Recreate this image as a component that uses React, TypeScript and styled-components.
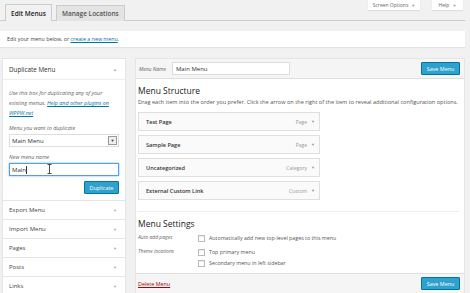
import styled, { createGlobalStyle } from 'styled-components';

const Global = createGlobalStyle`
  html, body { margin: 0; padding: 0; background: #f1f1f1; }
  body { font-family: 'Open Sans', 'Liberation Sans', sans-serif; color: #444; font-size: 6px; }
  * { box-sizing: border-box; }
`;

const Page = styled.div`
  width: 470px;
  height: 293px;
  overflow: hidden;
  position: relative;
  padding-right: 5px;
`;

const TopBar = styled.div`
  display: flex;
  justify-content: flex-end;
  gap: 12px;
  padding-right: 2px;
  height: 10px;
  margin-bottom: -6px;
`;

const MetaTab = styled.div<{ $w: number }>`
  width: ${(p) => p.$w}px;
  height: 10px;
  background: #fff;
  box-shadow: 0 1px 1px rgba(0, 0, 0, 0.08);
  font-size: 5px;
  color: #666;
  display: flex;
  align-items: center;
  justify-content: center;
  gap: 3px;
`;

const Caret = styled.span`
  font-size: 4px;
  color: #999;
`;

const Tabs = styled.div`
  display: flex;
  gap: 4px;
  padding-left: 5px;
  border-bottom: 1px solid #ccc;
  height: 17px;
  align-items: flex-end;
`;

const Tab = styled.div<{ $active?: boolean }>`
  padding: 0 5px;
  display: flex;
  align-items: center;
  font-size: 6.5px;
  font-weight: 600;
  border: 1px solid #ccc;
  border-bottom: none;
  margin-bottom: -1px;
  background: ${(p) => (p.$active ? '#f1f1f1' : '#e4e4e4')};
  color: ${(p) => (p.$active ? '#222' : '#555')};
  height: ${(p) => (p.$active ? '17px' : '16px')};
`;

const Notice = styled.div`
  margin-top: 10px;
  height: 16px;
  background: #fff;
  box-shadow: 0 1px 1px rgba(0, 0, 0, 0.06);
  display: flex;
  align-items: center;
  padding-left: 7px;
  font-size: 5.3px;
`;

const Link = styled.a`
  color: #0074a2;
  text-decoration: underline;
`;

const Columns = styled.div`
  display: flex;
  gap: 9px;
  margin-top: 11px;
  padding-left: 2px;
`;

const Left = styled.div`
  width: 124px;
  flex: none;
`;

const Box = styled.div`
  background: #fff;
  border: 1px solid #e5e5e5;
`;

const BoxHead = styled.div`
  height: 21px;
  display: flex;
  align-items: center;
  justify-content: space-between;
  padding: 0 8px 0 6px;
  font-size: 6.3px;
  color: #333;
  border-bottom: 1px solid #eee;
`;

const Toggle = styled.span`
  font-size: 4px;
  color: #aaa;
`;

const BoxBody = styled.div`
  padding: 8px 6px 6px 6px;
`;

const Help = styled.p`
  margin: 0;
  font-style: italic;
  font-size: 5.4px;
  line-height: 10px;
  color: #666;
`;

const Label = styled.div`
  margin-top: 6px;
  font-style: italic;
  font-size: 5.4px;
  color: #666;
  line-height: 9px;
`;

const Select = styled.div`
  margin-top: 1px;
  height: 13px;
  border: 1px solid #ddd;
  display: flex;
  align-items: center;
  justify-content: space-between;
  padding-left: 2px;
  font-size: 6px;
  color: #333;
`;

const SelectBtn = styled.span`
  width: 9px;
  height: 9px;
  margin-right: 1px;
  border: 1px solid #999;
  background: #eee;
  display: flex;
  align-items: center;
  justify-content: center;
  font-size: 4px;
  color: #333;
`;

const Input = styled.div`
  margin-top: 1px;
  height: 13px;
  border: 1px solid #5b9dd9;
  box-shadow: 0 0 2px rgba(30, 140, 190, 0.6);
  display: flex;
  align-items: center;
  padding-left: 2px;
  font-size: 6px;
  color: #333;
  position: relative;
`;

const Cursor = styled.span`
  width: 0.5px;
  height: 8px;
  background: #333;
  margin-left: 0.5px;
`;

const IBeam = styled.svg`
  position: absolute;
  left: 37px;
  top: 0px;
`;

const Row = styled.div<{ $top?: number }>`
  display: flex;
  justify-content: flex-end;
  margin-top: ${(p) => p.$top ?? 5}px;
`;

const Button = styled.div<{ $w: number }>`
  width: ${(p) => p.$w}px;
  height: 13px;
  background: #2ea2cc;
  border: 1px solid #0074a2;
  border-radius: 1px;
  color: #fff;
  font-size: 5.4px;
  display: flex;
  align-items: center;
  justify-content: center;
`;

const Acc = styled.div`
  height: 19px;
  display: flex;
  align-items: center;
  justify-content: space-between;
  padding: 0 8px 0 6px;
  background: #fff;
  border: 1px solid #e5e5e5;
  border-top: none;
  font-size: 6px;
  color: #444;
`;

const Right = styled.div`
  width: 330px;
  flex: none;
  border: 1px solid #e5e5e5;
`;

const MenuHead = styled.div`
  height: 20px;
  background: #f5f5f5;
  border-bottom: 1px solid #dfdfdf;
  display: flex;
  align-items: center;
  padding: 0 4px 0 3px;
  gap: 6px;
`;

const SmallLabel = styled.span<{ $w?: number }>`
  font-style: italic;
  font-size: 5px;
  color: #666;
  width: ${(p) => (p.$w ? `${p.$w}px` : 'auto')};
  flex: none;
`;

const NameInput = styled.div`
  width: 118px;
  height: 13px;
  background: #fff;
  border: 1px solid #ddd;
  font-size: 6px;
  color: #333;
  display: flex;
  align-items: center;
  padding-left: 3px;
`;

const Spacer = styled.div`
  flex: 1;
`;

const MenuBody = styled.div`
  background: #fff;
  padding: 6px 5px 0 2px;
  height: 194px;
`;

const H3 = styled.div<{ $top?: number }>`
  font-size: 8.5px;
  color: #222;
  margin-top: ${(p) => p.$top ?? 0}px;
  line-height: 11px;
`;

const Desc = styled.div`
  font-size: 5.6px;
  color: #555;
  margin-top: 2px;
  white-space: nowrap;
`;

const Items = styled.div`
  margin-top: 6px;
  display: flex;
  flex-direction: column;
  gap: 4px;
  width: 182px;
`;

const Item = styled.div`
  height: 19px;
  background: #fafafa;
  border: 1px solid #dfdfdf;
  display: flex;
  align-items: center;
  justify-content: space-between;
  padding: 0 4px 0 7px;
  font-size: 5.6px;
  font-weight: 600;
  color: #333;
`;

const ItemType = styled.span`
  font-weight: 400;
  font-size: 5px;
  color: #999;
  display: flex;
  gap: 4px;
  align-items: center;
`;

const Sep = styled.div`
  margin-top: 11px;
  border-top: 1px solid #eee;
`;

const SettingRow = styled.div<{ $top?: number }>`
  display: flex;
  margin-top: ${(p) => p.$top ?? 0}px;
`;

const Checks = styled.div`
  display: flex;
  flex-direction: column;
  gap: 3px;
`;

const Check = styled.label`
  display: flex;
  align-items: center;
  gap: 4px;
  font-size: 5.3px;
  color: #555;
  line-height: 8px;
`;

const Box8 = styled.span`
  width: 7px;
  height: 7px;
  border: 1px solid #bbb;
  background: #fff;
  box-shadow: inset 0 1px 1px rgba(0, 0, 0, 0.08);
`;

const MenuFoot = styled.div`
  height: 20px;
  background: #f5f5f5;
  border-top: 1px solid #dfdfdf;
  display: flex;
  align-items: center;
  padding: 0 4px 0 2px;
`;

const Delete = styled.a`
  color: #a00;
  text-decoration: underline;
  font-size: 5.4px;
`;

const items = [
  ['Test Page', 'Page'],
  ['Sample Page', 'Page'],
  ['Uncategorized', 'Category'],
  ['External Custom Link', 'Custom'],
];

export default function App() {
  return (
    <Page>
      <Global />
      <TopBar>
        <MetaTab $w={52}>
          Screen Options <Caret>▼</Caret>
        </MetaTab>
        <MetaTab $w={31}>
          Help <Caret>▼</Caret>
        </MetaTab>
      </TopBar>
      <Tabs>
        <Tab $active>Edit Menus</Tab>
        <Tab>Manage Locations</Tab>
      </Tabs>
      <Notice>
        Edit your menu below, or&nbsp;<Link>create a new menu</Link>.
      </Notice>
      <Columns>
        <Left>
          <Box>
            <BoxHead>
              Duplicate Menu <Toggle>▲</Toggle>
            </BoxHead>
            <BoxBody>
              <Help>
                Use this box for duplicating any of your existing menus. <Link>Help and other plugins on WPPW.net</Link>
              </Help>
              <Label>Menu you want to duplicate</Label>
              <Select>
                Main Menu <SelectBtn>▼</SelectBtn>
              </Select>
              <Label>New menu name</Label>
              <Input>
                Main
                <Cursor />
                <IBeam width="5" height="10" viewBox="0 0 5 10">
                  <path d="M0.5 0.5h4M2.5 0.5v9M0.5 9.5h4" stroke="#222" strokeWidth="0.8" fill="none" />
                </IBeam>
              </Input>
              <Row>
                <Button $w={35}>Duplicate</Button>
              </Row>
            </BoxBody>
          </Box>
          {['Export Menu', 'Import Menu', 'Pages', 'Posts', 'Links'].map((t) => (
            <Acc key={t}>
              {t} <Toggle>▼</Toggle>
            </Acc>
          ))}
        </Left>
        <Right>
          <MenuHead>
            <SmallLabel>Menu Name</SmallLabel>
            <NameInput>Main Menu</NameInput>
            <Spacer />
            <Button $w={39}>Save Menu</Button>
          </MenuHead>
          <MenuBody>
            <H3 $top={0}>Menu Structure</H3>
            <Desc>
              Drag each item into the order you prefer. Click the arrow on the right of the item to reveal additional configuration options.
            </Desc>
            <Items>
              {items.map(([t, k]) => (
                <Item key={t}>
                  {t}
                  <ItemType>
                    {k} <Caret>▼</Caret>
                  </ItemType>
                </Item>
              ))}
            </Items>
            <Sep />
            <H3 $top={6}>Menu Settings</H3>
            <SettingRow $top={5}>
              <SmallLabel $w={60}>Auto add pages</SmallLabel>
              <Check>
                <Box8 /> Automatically add new top-level pages to this menu
              </Check>
            </SettingRow>
            <SettingRow $top={6}>
              <SmallLabel $w={60}>Theme locations</SmallLabel>
              <Checks>
                <Check>
                  <Box8 /> Top primary menu
                </Check>
                <Check>
                  <Box8 /> Secondary menu in left sidebar
                </Check>
              </Checks>
            </SettingRow>
          </MenuBody>
          <MenuFoot>
            <Delete>Delete Menu</Delete>
            <Spacer />
            <Button $w={39}>Save Menu</Button>
          </MenuFoot>
        </Right>
      </Columns>
    </Page>
  );
}
